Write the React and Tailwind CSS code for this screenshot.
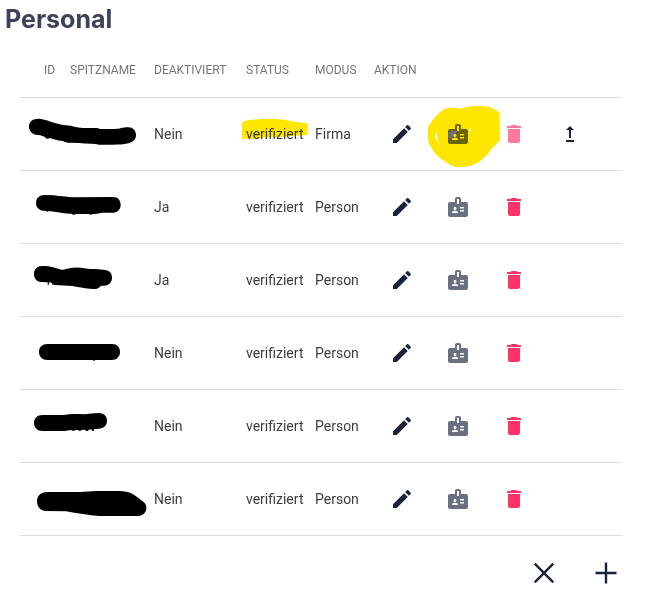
import React from 'react'
import { MdBadge, MdDelete, MdEdit, MdUpgrade } from 'react-icons/md'

const personal = [
  {
    deaktiviert: 'Nein',
    status: 'verifiziert',
    modus: 'Firma',
    marked: true,
    viewBox: '0 -6 390 216',
    scribble: 'M27 80C27 66 37 57 50 57C60 55 78 60 92 65C112 72 132 76 152 77C166 82 182 84 205 84L232 84L240 87L285 87C300 87 306 82 325 82C339 82 348 92 348 105C348 119 339 126 325 130C310 134 295 134 280 134L237 134C222 131 198 132 178 129L145 128C134 127 131 122 122 122C108 121 99 116 89 114C85 118 77 116 74 110C64 106 58 104 48 104C36 102 27 92 27 80Z',
  },
  {
    deaktiviert: 'Ja',
    status: 'verifiziert',
    modus: 'Person',
    viewBox: '0 213 390 216',
    scribble: 'M48 309C48 294 58 285 74 285L102 286C118 289 139 290 154 292L280 291C294 291 302 301 302 315C302 328 293 337 280 338L245 338C231 342 216 341 211 344L205 342L168 342L160 345L155 341C134 340 118 337 102 335L87 333L83 336L79 333L70 332C57 331 48 322 48 309Z',
  },
  {
    deaktiviert: 'Ja',
    status: 'verifiziert',
    modus: 'Person',
    viewBox: '0 -18 390 216',
    scribble: 'M42 72C42 57 52 48 66 48C86 47 107 53 119 58C132 62 141 53 165 53C184 52 199 57 213 57C228 57 240 58 255 60C268 61 276 69 276 83C276 98 265 107 251 107L243 107C237 114 232 117 222 117C204 117 188 112 169 110C154 107 134 108 117 106L97 104L96 100L91 97L86 98L87 105L83 104L83 97L64 96C51 96 42 86 42 72Z',
  },
  {
    deaktiviert: 'Nein',
    status: 'verifiziert',
    modus: 'Person',
    viewBox: '0 201 390 216',
    scribble: 'M57 306C57 291 67 282 82 282L276 282C291 282 300 291 300 306C300 320 290 330 276 330L226 330L222 333L218 330L82 330C67 330 57 320 57 306Z',
  },
  {
    deaktiviert: 'Nein',
    status: 'verifiziert',
    modus: 'Person',
    viewBox: '0 -30 390 216',
    scribble: 'M42 69C42 54 52 45 67 45L132 45C151 41 173 42 190 43C207 42 220 39 236 39C251 39 261 48 261 62C261 77 250 85 237 86L222 88L221 93L216 92L214 88L206 89L204 93L198 93L196 89L187 89L180 93L174 90L165 91L159 93L153 90L134 93L67 93C52 93 42 83 42 69Z',
  },
  {
    deaktiviert: 'Nein',
    status: 'verifiziert',
    modus: 'Person',
    viewBox: '0 189 390 216',
    scribble: 'M51 304C51 289 61 278 76 277C88 275 94 276 108 276L180 276C201 275 218 272 240 273L299 273C322 274 337 279 348 289L367 303C376 309 379 315 379 323C379 338 369 347 355 348L238 348C207 346 169 340 138 334L77 333C61 332 51 320 51 304Z',
  },
]

const iconBtn = 'relative flex h-12 w-12 items-center justify-center rounded-full'

const StatusMarker = () => (
  <svg
    viewBox="300 18 216 78"
    className="pointer-events-none absolute -left-1.5 -top-2 h-[26px] w-[72px] max-w-none mix-blend-multiply"
    aria-hidden="true"
  >
    <path
      fill="#ffe600"
      d="M306 37C314 33 322 30 337 29C360 27 385 26 409 27C434 29 451 33 471 36L503 40L503 75L463 77C445 77 433 81 408 81C383 81 357 84 336 86L306 87Z"
    />
  </svg>
)

const BadgeMarker = () => (
  <svg
    viewBox="138 27 228 192"
    className="pointer-events-none absolute -left-2 -top-1.5 h-16 w-[76px] max-w-none mix-blend-multiply"
    aria-hidden="true"
  >
    <path
      fill="#ffe600"
      fillRule="evenodd"
      d="M144 97C154 78 170 58 193 42C208 37 226 38 243 41C263 33 292 32 315 34C334 38 350 43 359 56L360 132C354 147 342 152 333 163C324 181 309 191 296 202C279 213 260 216 242 216C225 216 214 213 205 206C188 195 176 188 167 177C158 164 147 150 144 134ZM171 112L164 123L170 135L180 147L172 131ZM208 112C215 105 223 106 230 108L227 117C219 120 216 126 217 133C207 131 200 120 208 112ZM275 99L266 104L269 110Z"
    />
  </svg>
)

const PersonalRow = ({ user }) => {
  return (
    <tr className="border-b border-[#dedede]">
      <td colSpan={2} className="p-0">
        <svg viewBox={user.viewBox} className="block h-[72px] w-[130px]" aria-hidden="true">
          <path d={user.scribble} fill="#000" />
        </svg>
      </td>
      <td className="p-0">{user.deaktiviert}</td>
      <td className="p-0">
        <span className="relative inline-block">
          {user.status}
          {user.marked && <StatusMarker />}
        </span>
      </td>
      <td className="p-0">{user.modus}</td>
      <td className="p-0">
        {/* Action Buttons */}
        <div className="flex gap-2 pl-1 text-[#1a233a]">
          <button type="button" aria-label="Bearbeiten" className={iconBtn}>
            <MdEdit className="h-6 w-6" />
          </button>
          <button type="button" aria-label="Ausweis" className={iconBtn}>
            <MdBadge className="h-6 w-6 text-[#6b7080]" />
            {user.marked && <BadgeMarker />}
          </button>
          <button type="button" aria-label="Löschen" disabled={user.marked} className={iconBtn}>
            <MdDelete className={user.marked ? 'h-6 w-6 text-[#ff7a99]' : 'h-6 w-6 text-[#ff3366]'} />
          </button>
          {user.marked && (
            <button type="button" aria-label="Hochstufen" className={iconBtn}>
              <MdUpgrade className="h-6 w-6" />
            </button>
          )}
        </div>
      </td>
    </tr>
  )
}

const App = () => {
  return (
    <main className="min-h-screen bg-white font-['Roboto',sans-serif]">
      <h1 className="px-[5px] pt-[3px] font-['Inter',sans-serif] text-[25px] leading-8 font-bold text-[#3c4358]">
        Personal
      </h1>

      <div className="pt-2 pr-[30px] pl-5">
        <table className="w-full table-fixed border-collapse text-left text-sm text-[#3d3d3d]">
          <colgroup>
            <col className="w-[50px]" />
            <col className="w-[84px]" />
            <col className="w-[92px]" />
            <col className="w-[69px]" />
            <col className="w-[59px]" />
            <col />
          </colgroup>
          <thead>
            <tr className="h-[54px] border-b border-[#dedede] text-xs text-[#757575]">
              <th className="p-0 pl-6 font-normal">ID</th>
              <th className="p-0 font-normal">SPITZNAME</th>
              <th className="p-0 font-normal">DEAKTIVIERT</th>
              <th className="p-0 font-normal">STATUS</th>
              <th className="p-0 font-normal">MODUS</th>
              <th className="p-0 font-normal">AKTION</th>
            </tr>
          </thead>
          <tbody>
            {personal.map((user, index) => (
              <PersonalRow key={index} user={user} />
            ))}
          </tbody>
        </table>

        {/* Footer Buttons */}
        <div className="-mr-2 flex justify-end gap-3.5 pt-[13px] text-[#1a233a]">
          <button type="button" aria-label="Schließen" className={iconBtn}>
            <svg viewBox="0 0 24 24" className="h-6 w-6" fill="none" stroke="currentColor" strokeWidth="2.4">
              <path d="M2.7 2.7L21.3 21.3M21.3 2.7L2.7 21.3" />
            </svg>
          </button>
          <button type="button" aria-label="Hinzufügen" className={iconBtn}>
            <svg viewBox="0 0 24 24" className="h-6 w-6" fill="none" stroke="currentColor" strokeWidth="2.4">
              <path d="M12 1.5V22.5M1.5 12H22.5" />
            </svg>
          </button>
        </div>
      </div>
    </main>
  )
}

export default App
